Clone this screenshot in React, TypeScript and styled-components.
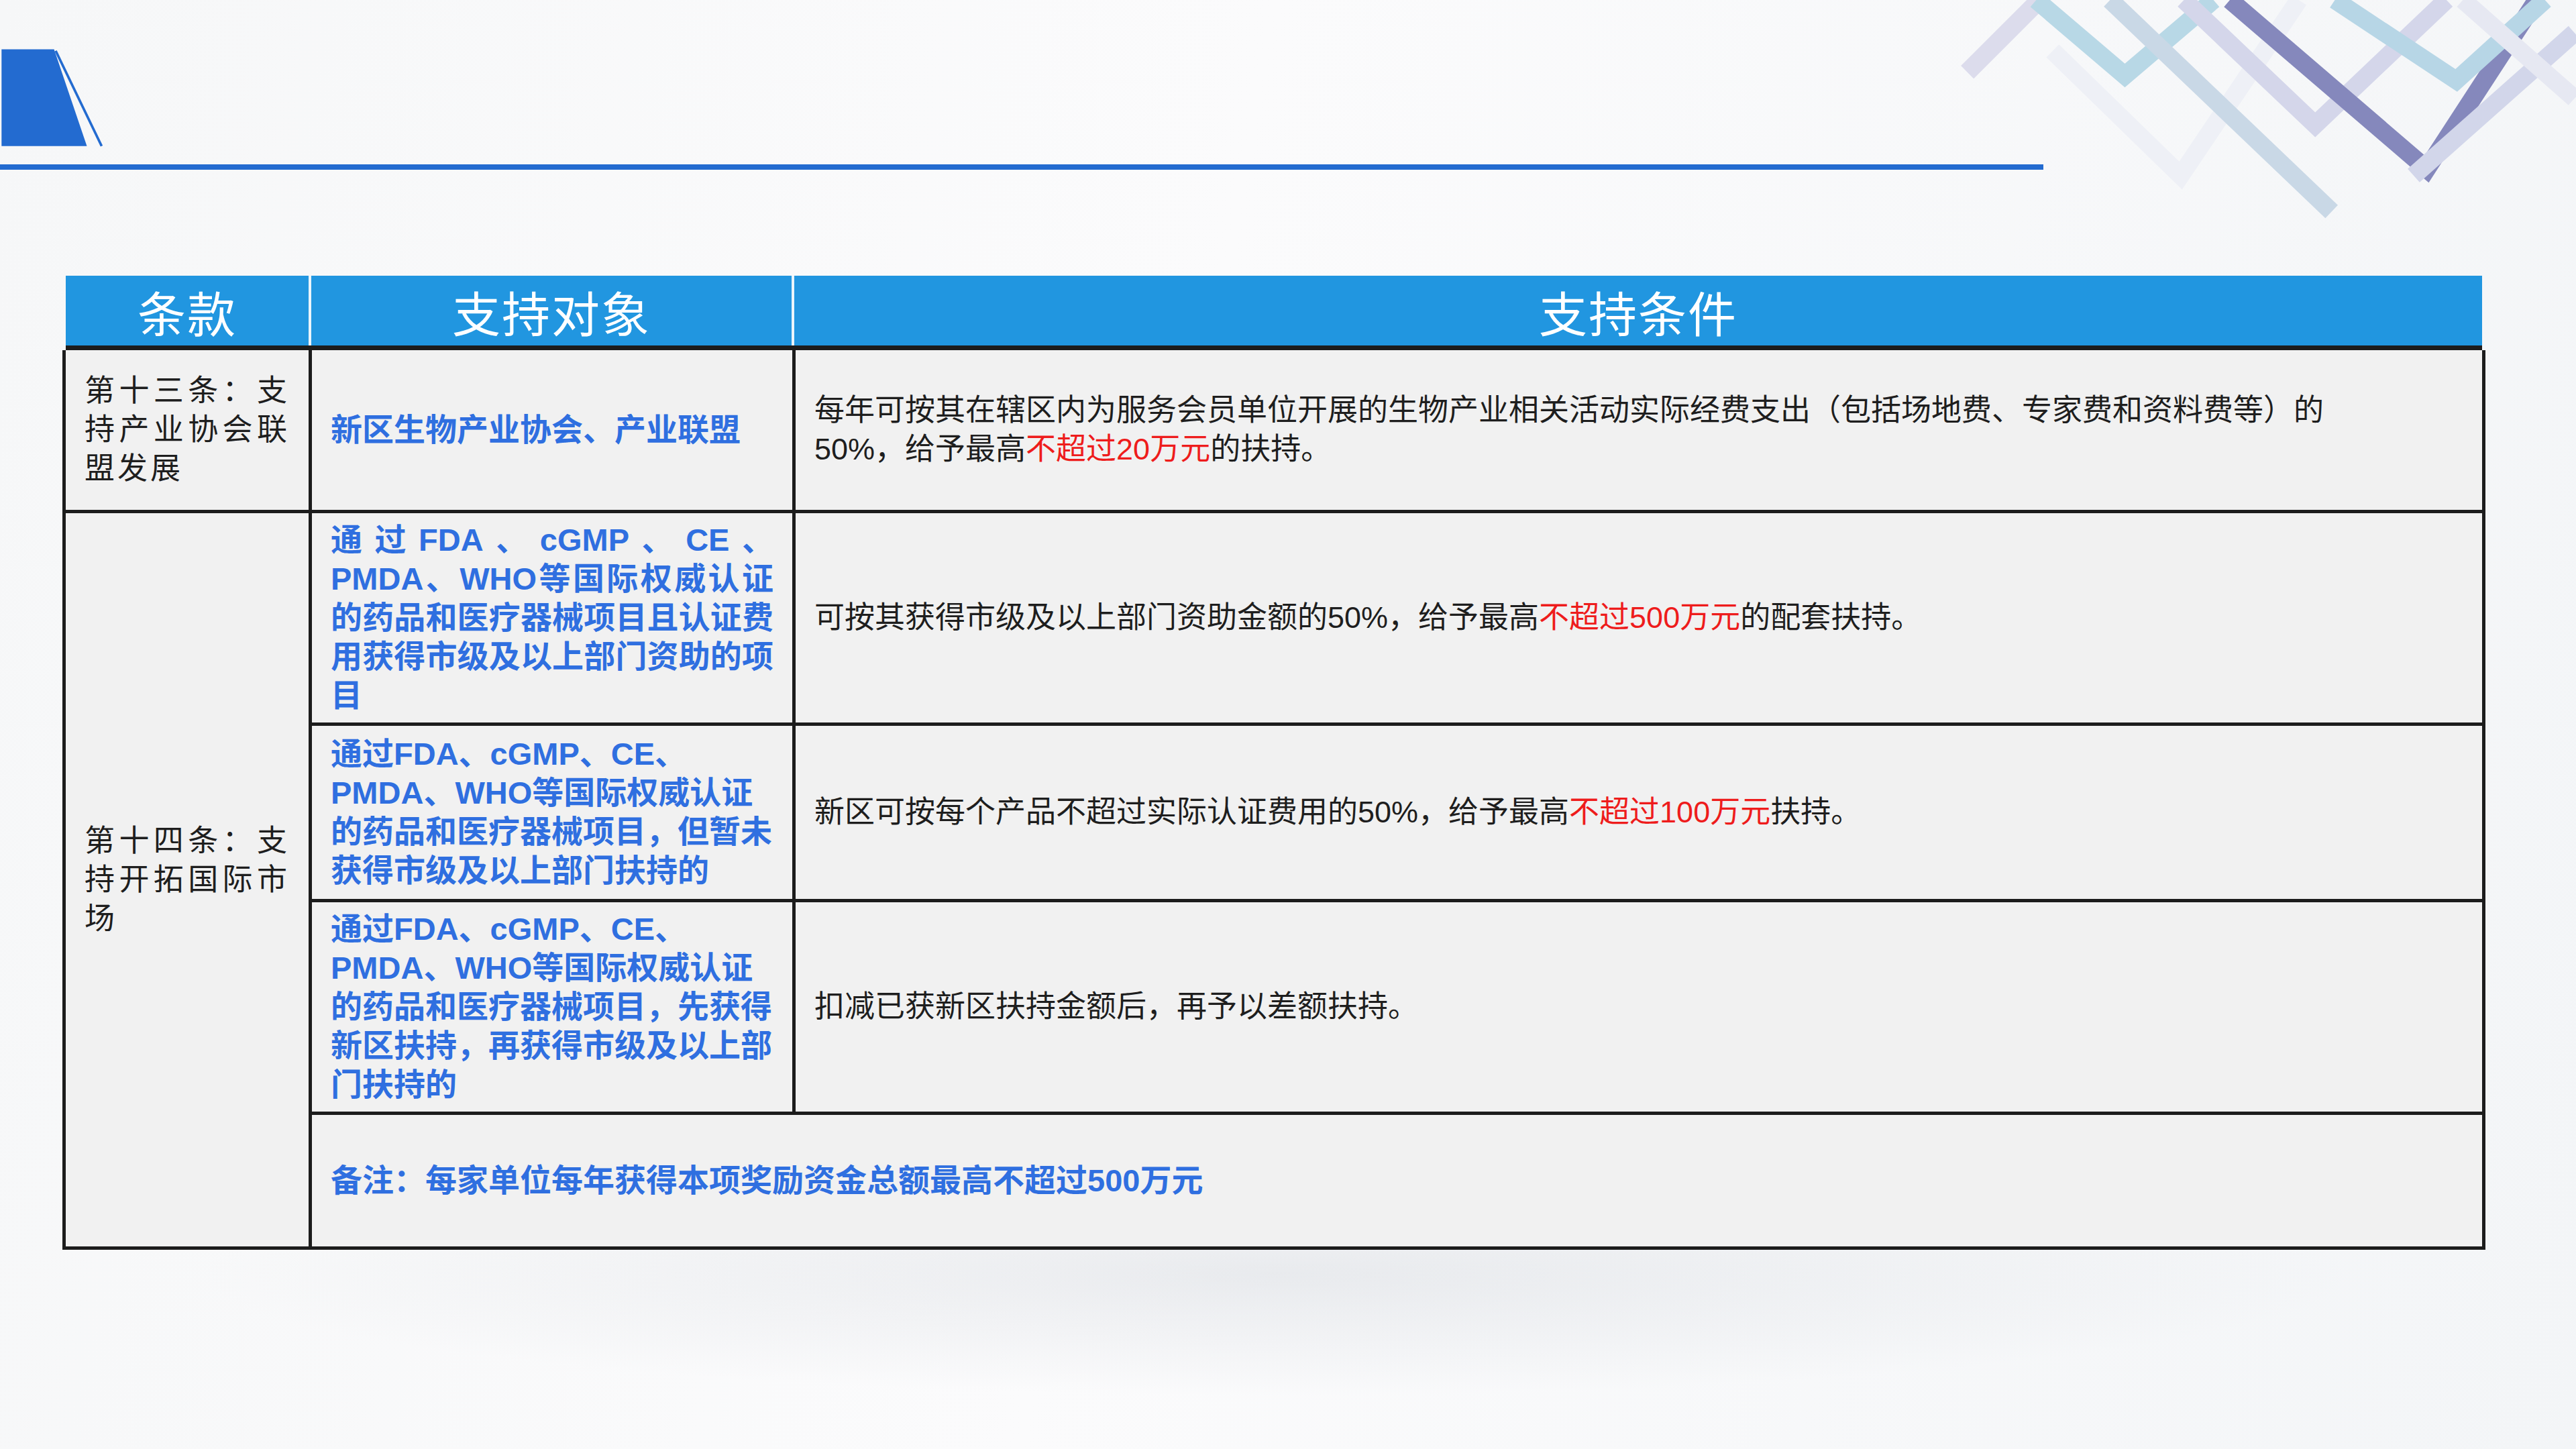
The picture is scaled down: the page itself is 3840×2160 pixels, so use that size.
import styled, { createGlobalStyle } from "styled-components";

const Global = createGlobalStyle`
  html, body { margin: 0; padding: 0; }
  body {
    width: 3840px;
    height: 2160px;
    overflow: hidden;
    font-family: "Liberation Sans", "Noto Sans CJK SC", sans-serif;
  }
`;

const Page = styled.div`
  position: relative;
  width: 3840px;
  height: 2160px;
  background:
    radial-gradient(ellipse 1600px 180px at 1900px 1900px, rgba(200, 205, 212, 0.35), transparent),
    linear-gradient(100deg, #f6f7f8 0%, #fbfbfc 45%, #f3f5f7 100%);
  display: flex;
  flex-direction: column;
`;

const TopBar = styled.div`
  height: 253px;
  display: flex;
  flex-direction: column;
  justify-content: flex-end;
`;

const Rule = styled.div`
  width: 3046px;
  height: 8px;
  background: #236bd0;
`;

const Deco = styled.svg`
  position: absolute;
  top: 0;
  left: 0;
`;

const Table = styled.div`
  margin: 158px 0 0 98px;
  width: 3602px;
`;

const Head = styled.div`
  display: grid;
  grid-template-columns: 362px 716px 1fr;
  gap: 4px;
  background: #eaf4fb;
  border-bottom: 7px solid #1c1c1c;
`;

const HeadCell = styled.div`
  background: #2196e0;
  height: 104px;
  display: flex;
  align-items: center;
  justify-content: center;
  color: #fff;
  font-size: 72px;
  letter-spacing: 2px;
`;

const Body = styled.div`
  display: grid;
  grid-template-columns: 362px 716px 1fr;
  grid-template-rows: 238px 312px 258px 312px 196px;
  gap: 5px;
  background: #1c1c1c;
  padding: 0 5px 5px 5px;
  margin-left: -5px;
  margin-right: -5px;
`;

const Cell = styled.div<{ $row?: string; $col?: string; $blue?: boolean }>`
  grid-row: ${(p) => p.$row ?? "auto"};
  grid-column: ${(p) => p.$col ?? "auto"};
  background: #f1f1f1;
  display: flex;
  align-items: center;
  padding: 0 28px;
  font-size: ${(p) => (p.$blue ? "47px" : "45px")};
  line-height: 58px;
  color: ${(p) => (p.$blue ? "#2f6fe0" : "#1e1e1e")};
  font-weight: ${(p) => (p.$blue ? 700 : 400)};
`;

const Text = styled.div<{ $justify?: boolean }>`
  width: 100%;
  text-align: ${(p) => (p.$justify ? "justify" : "left")};
  text-justify: inter-character;
`;

const Spread = styled.span`
  display: block;
  text-align: justify;
  text-align-last: justify;
  text-justify: inter-character;
`;

const Clause = styled(Text)`
  letter-spacing: 4px;
`;

const Red = styled.span`
  color: #ee1c1c;
`;

export default function App() {
  return (
    <Page>
      <Global />
      <Deco width="3840" height="340" viewBox="0 0 1568 139">
        <polygon points="0,30 32,30 52,89 0,89" fill="#236bd0" />
        <line x1="33" y1="31" x2="61" y2="89" stroke="#236bd0" strokeWidth="1.5" />
        <g fill="none" strokeWidth="11" strokeLinecap="butt">
          <polyline points="1198,44 1242,0" stroke="#dcdcec" />
          <polyline points="1250,31 1328,107 1400,0" stroke="#eef0f6" />
          <polyline points="1240,0 1294,46 1348,0" stroke="#b8d8e6" />
          <polyline points="1285,0 1420,129" stroke="#c9d8e6" />
          <polyline points="1330,0 1410,76 1490,0" stroke="#d4d6ea" />
          <polyline points="1358,0 1478,103 1545,0" stroke="#8588bc" />
          <polyline points="1422,0 1496,49 1550,0" stroke="#b7d6e6" />
          <polyline points="1470,107 1568,20" stroke="#d2d6ea" />
          <polyline points="1500,0 1568,60" stroke="#e6e8f2" />
        </g>
      </Deco>
      <TopBar>
        <Rule />
      </TopBar>
      <Table>
        <Head>
          <HeadCell>条款</HeadCell>
          <HeadCell>支持对象</HeadCell>
          <HeadCell>支持条件</HeadCell>
        </Head>
        <Body>
          <Cell>
            <Clause $justify>第十三条：支持产业协会联盟发展</Clause>
          </Cell>
          <Cell $blue>
            <Text>新区生物产业协会、产业联盟</Text>
          </Cell>
          <Cell>
            <Text>
              每年可按其在辖区内为服务会员单位开展的生物产业相关活动实际经费支出（包括场地费、专家费和资料费等）的<br />
              50%，给予最高<Red>不超过20万元</Red>的扶持。
            </Text>
          </Cell>

          <Cell $row="2 / 6" $col="1">
            <Clause $justify>第十四条：支持开拓国际市场</Clause>
          </Cell>
          <Cell $blue>
            <Text $justify>
              <Spread>通过FDA、cGMP、CE、</Spread>
              PMDA、WHO等国际权威认证的药品和医疗器械项目且认证费用获得市级及以上部门资助的项目
            </Text>
          </Cell>
          <Cell>
            <Text>
              可按其获得市级及以上部门资助金额的50%，给予最高<Red>不超过500万元</Red>的配套扶持。
            </Text>
          </Cell>
          <Cell $blue>
            <Text>
              通过FDA、cGMP、CE、<br />
              PMDA、WHO等国际权威认证的药品和医疗器械项目，但暂未获得市级及以上部门扶持的
            </Text>
          </Cell>
          <Cell>
            <Text>
              新区可按每个产品不超过实际认证费用的50%，给予最高<Red>不超过100万元</Red>扶持。
            </Text>
          </Cell>
          <Cell $blue>
            <Text>
              通过FDA、cGMP、CE、<br />
              PMDA、WHO等国际权威认证的药品和医疗器械项目，先获得新区扶持，再获得市级及以上部门扶持的
            </Text>
          </Cell>
          <Cell>
            <Text>扣减已获新区扶持金额后，再予以差额扶持。</Text>
          </Cell>
          <Cell $blue $col="2 / 4">
            <Text>备注：每家单位每年获得本项奖励资金总额最高不超过500万元</Text>
          </Cell>
        </Body>
      </Table>
    </Page>
  );
}
